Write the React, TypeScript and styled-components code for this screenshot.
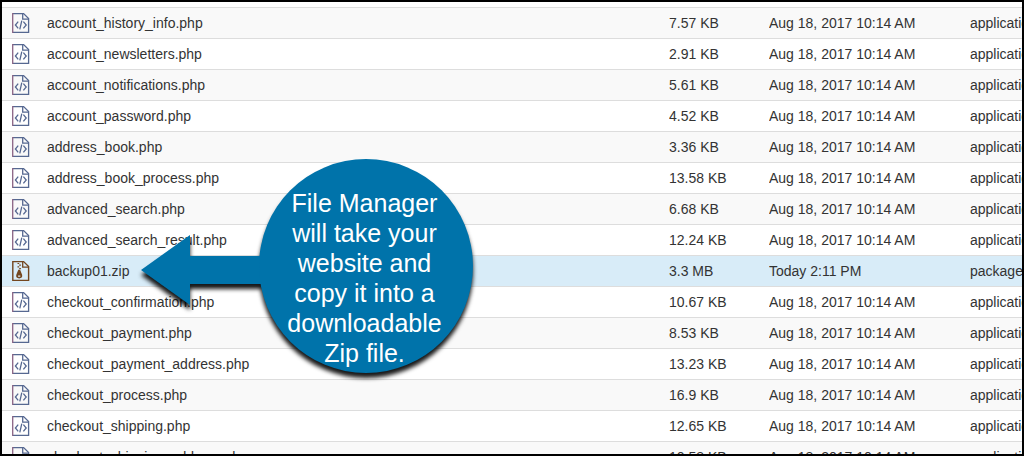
import React from "react";
import styled, { createGlobalStyle } from "styled-components";

const GlobalStyle = createGlobalStyle`
  * { box-sizing: border-box; }
  body {
    margin: 0;
    background: #fff;
    color: #333;
    font-family: "Liberation Sans", Arial, sans-serif;
    font-size: 14px;
    line-height: 20px;
  }
`;

const Frame = styled.main`
  position: relative;
  height: 100vh;
  padding-top: 5px;
  overflow: hidden;
  border: 2px solid #000;
  background: #fff;
`;

const FileTable = styled.table`
  width: 100%;
  table-layout: fixed;
  border-collapse: separate;
  border-spacing: 0;
`;

const Column = styled.col<{ $width?: number }>`
  width: ${({ $width }) => ($width ? `${$width}px` : "auto")};
`;

const Row = styled.tr<{ $selected?: boolean }>`
  background: ${({ $selected }) => ($selected ? "#d8ecf8" : "#fff")};
  &:nth-child(odd) {
    background: ${({ $selected }) => ($selected ? "#d8ecf8" : "#f9f9f9")};
  }
`;

const Cell = styled.td`
  height: 31px;
  padding: 0;
  border-top: 1px solid #ddd;
  overflow: hidden;
  white-space: nowrap;
  vertical-align: middle;
`;

const IconCell = styled(Cell)`
  padding-left: 9px;
`;

const Icon = styled.svg`
  display: block;
  width: 20px;
  height: 22px;
`;

const Callout = styled.aside`
  position: absolute;
  left: 138px;
  top: 156px;
  width: 333px;
  height: 215px;
  padding: 30px 0 0 120px;
  color: #fff;
  font-size: 25px;
  line-height: 30px;
  text-align: center;
`;

const CalloutShape = styled.svg`
  position: absolute;
  inset: 0;
  width: 100%;
  height: 100%;
  overflow: visible;
  filter: drop-shadow(0 5px 2px rgba(0, 0, 0, 0.9));
`;

const CalloutText = styled.p`
  position: relative;
  margin: 0;
  padding-right: 4px;
`;

const calloutLines = [
  "File Manager",
  "will take your",
  "website and",
  "copy it into a",
  "downloadable",
  "Zip file.",
];

type FileEntry = { name: string; size: string; date?: string; zip?: boolean };

const files: FileEntry[] = [
  { name: "account_history_info.php", size: "7.57 KB" },
  { name: "account_newsletters.php", size: "2.91 KB" },
  { name: "account_notifications.php", size: "5.61 KB" },
  { name: "account_password.php", size: "4.52 KB" },
  { name: "address_book.php", size: "3.36 KB" },
  { name: "address_book_process.php", size: "13.58 KB" },
  { name: "advanced_search.php", size: "6.68 KB" },
  { name: "advanced_search_result.php", size: "12.24 KB" },
  { name: "backup01.zip", size: "3.3 MB", date: "Today 2:11 PM", zip: true },
  { name: "checkout_confirmation.php", size: "10.67 KB" },
  { name: "checkout_payment.php", size: "8.53 KB" },
  { name: "checkout_payment_address.php", size: "13.23 KB" },
  { name: "checkout_process.php", size: "16.9 KB" },
  { name: "checkout_shipping.php", size: "12.65 KB" },
  { name: "checkout_shipping_address.php", size: "10.58 KB" },
];

function CodeFileIcon() {
  return (
    <Icon viewBox="0 0 20 22" fill="none" aria-hidden="true">
      <path d="M2 1.6H12.6L17.6 6.6V20.4H2" stroke="#566891" strokeWidth="1.3" />
      <path d="M1.7 1V21" stroke="#8a6384" strokeWidth="1.3" />
      <path d="M11.700 2V7.200H17.400" stroke="#566891" strokeWidth="1.3" />
      <path
        d="M7.200 9.600L4.400 13L7.200 16.400M12.400 9.600L15.200 13L12.400 16.400M10.800 8.600L8.800 17.400"
        stroke="#566891"
        strokeWidth="1.3"
      />
    </Icon>
  );
}

function ZipFileIcon() {
  return (
    <Icon viewBox="0 0 20 22" fill="none" aria-hidden="true">
      <path d="M1.8 1.6H12.6L17.6 6.6V20.4H1.8Z" stroke="#73461f" strokeWidth="1.4" />
      <path d="M11.700 2V7.200H17.400" stroke="#73461f" strokeWidth="1.3" />
      <path
        d="M6.500 3.500H8.200M8.200 5.200H9.900M6.500 6.900H8.200M8.200 8.600H9.900"
        stroke="#73461f"
        strokeWidth="1.2"
      />
      <path
        fillRule="evenodd"
        fill="#73461f"
        d="M7.300 9.800H9.100L11.100 14.800C11.800 17 10.300 18.400 8.200 18.400S4.600 17 5.300 14.800ZM7.100 15.600V16.800H9.300V15.600Z"
      />
    </Icon>
  );
}

export default function App() {
  return (
    <>
      <GlobalStyle />
      <Frame>
        <FileTable aria-label="Files">
          <colgroup>
            <Column $width={45} />
            <Column />
            <Column $width={100} />
            <Column $width={201} />
            <Column $width={52} />
          </colgroup>
          <tbody>
            {files.map((file) => (
              <Row key={file.name} $selected={file.zip}>
                <IconCell>{file.zip ? <ZipFileIcon /> : <CodeFileIcon />}</IconCell>
                <Cell>{file.name}</Cell>
                <Cell>{file.size}</Cell>
                <Cell>{file.date ?? "Aug 18, 2017 10:14 AM"}</Cell>
                <Cell>{file.zip ? "package" : "application"}</Cell>
              </Row>
            ))}
          </tbody>
        </FileTable>
        <Callout>
          <CalloutShape viewBox="0 0 333 215" aria-hidden="true">
            <path d="M1 112L50 77V98H130V126H50V147Z" fill="#0073aa" />
            <circle cx="226" cy="108" r="107" fill="#0073aa" />
          </CalloutShape>
          <CalloutText>
            {calloutLines.map((line) => (
              <React.Fragment key={line}>
                {line}
                <br />
              </React.Fragment>
            ))}
          </CalloutText>
        </Callout>
      </Frame>
    </>
  );
}
